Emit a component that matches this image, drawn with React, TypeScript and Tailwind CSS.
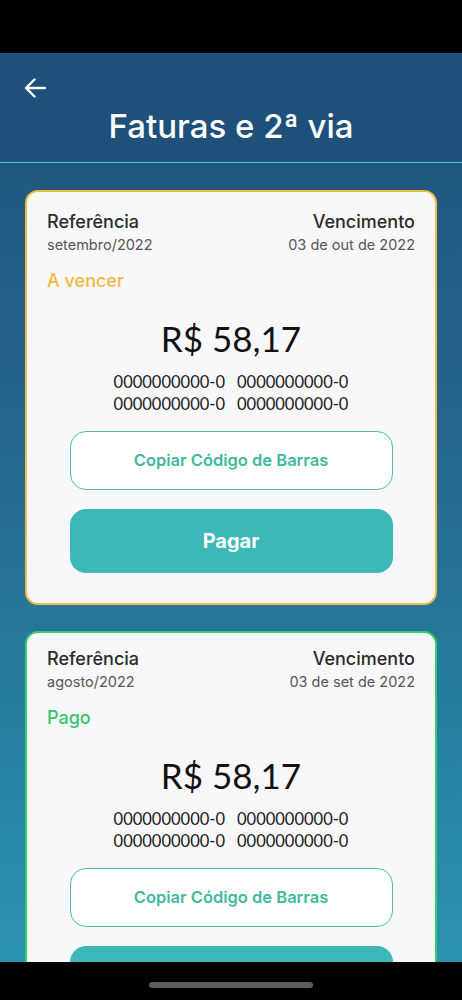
import { ReactNode } from 'react';

interface Invoice {
    reference: string;
    dueDate: string;
    status: string;
    amount: string;
    codes: string[];
    action: string;
    tone: 'pending' | 'paid';
}

const invoices: Invoice[] = [
    {
        reference: 'setembro/2022',
        dueDate: '03 de out de 2022',
        status: 'A vencer',
        amount: 'R$ 58,17',
        codes: ['0000000000-0', '0000000000-0', '0000000000-0', '0000000000-0'],
        action: 'Pagar',
        tone: 'pending',
    },
    {
        reference: 'agosto/2022',
        dueDate: '03 de set de 2022',
        status: 'Pago',
        amount: 'R$ 58,17',
        codes: ['0000000000-0', '0000000000-0', '0000000000-0', '0000000000-0'],
        action: 'Comprovante',
        tone: 'paid',
    },
];

const BackArrow = () => (
    <svg width="22" height="22" viewBox="0 0 22 22" fill="none">
        <path
            d="M21 11H2M10.5 2.5L2 11l8.5 8.5"
            stroke="white"
            strokeWidth="2.4"
            strokeLinecap="round"
            strokeLinejoin="round"
        />
    </svg>
);

function Labeled({ title, value, right }: { title: string; value: ReactNode; right?: boolean }) {
    return (
        <div className={right ? 'text-right' : ''}>
            <div className="text-[18px] leading-[22px] font-medium text-[#2b2b2b]">{title}</div>
            <div className="mt-[3px] text-[14.5px] leading-[18px] text-[#555]">{value}</div>
        </div>
    );
}

function InvoiceCard({ invoice }: { invoice: Invoice }) {
    const pending = invoice.tone === 'pending';

    return (
        <div
            className={
                pending
                    ? 'rounded-[13px] border-2 border-[#f2bb45] bg-[#f8f8fa] px-[20px] pt-[19px] pb-[30px]'
                    : 'rounded-[13px] border-2 border-[#34cf6c] bg-[#f8f8fa] px-[20px] pt-[15px] pb-[30px]'
            }
        >
            <div className="flex items-start justify-between">
                <Labeled title="Referência" value={invoice.reference} />
                <Labeled title="Vencimento" value={invoice.dueDate} right />
            </div>

            <div
                className={
                    pending
                        ? 'mt-[15px] text-[18px] leading-[24px] font-medium text-[#f4b844]'
                        : 'mt-[15px] text-[18px] leading-[24px] font-medium text-[#35c46c]'
                }
            >
                {invoice.status}
            </div>

            <div className="mt-[23px] text-center font-['Lato',sans-serif] text-[35px] leading-[44px] text-[#111]">
                {invoice.amount}
            </div>

            <div className="mx-auto mt-[11px] grid w-fit grid-cols-2 gap-x-[12px] font-['Lato',sans-serif] text-[16.5px] leading-[22px] text-[#1a1a1a]">
                {invoice.codes.map((code, i) => (
                    <span key={i}>{code}</span>
                ))}
            </div>

            <button className="mx-auto mt-[16px] flex h-[59px] w-[323px] items-center justify-center rounded-[16px] border border-[#4cc0a6] bg-white text-[16.5px] font-semibold text-[#40b99e]">
                Copiar Código de Barras
            </button>

            <button className="mx-auto mt-[19px] flex h-[64px] w-[323px] items-center justify-center rounded-[16px] bg-[#3bb8b7] text-[20px] font-bold text-white">
                {invoice.action}
            </button>
        </div>
    );
}

export default function App() {
    return (
        <div className="relative h-[1000px] w-full overflow-hidden bg-linear-to-b from-[#1e4d75] via-[#256d8f] to-[#2b97b2] font-['Inter',sans-serif]">
            <div className="h-[53px] bg-black" />

            <header className="h-[110px] border-b border-[#4fc8df] bg-[#1f5079]">
                <div className="pt-[24px] pl-[24px]">
                    <BackArrow />
                </div>
                <h1 className="mt-[7px] text-center text-[33px] leading-[40px] font-medium text-white">
                    Faturas e 2ª via
                </h1>
            </header>

            <main className="flex flex-col gap-[26px] px-[25px] pt-[27px]">
                {invoices.map((invoice) => (
                    <InvoiceCard key={invoice.reference} invoice={invoice} />
                ))}
            </main>

            <div className="absolute right-0 bottom-0 left-0 flex h-[38px] items-center justify-center bg-black">
                <div className="mt-[8px] h-[6px] w-[164px] rounded-full bg-[#5c5c5c]" />
            </div>
        </div>
    );
}
